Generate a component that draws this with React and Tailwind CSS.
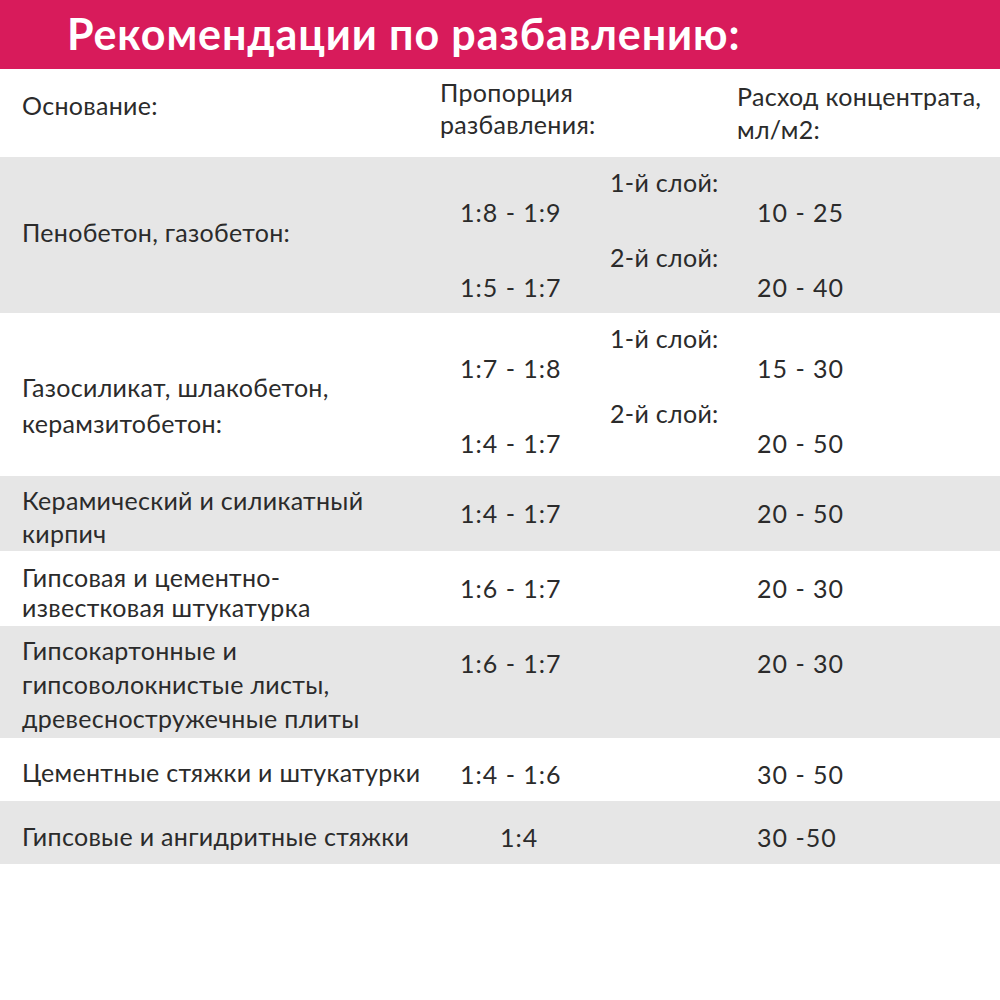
import React from "react";

const font = { fontFamily: "Lato, 'Open Sans', sans-serif" };

function Layered({ bg, h, labelPt, label, parts }) {
  return (
    <div className={`flex ${bg}`} style={{ height: h }}>
      <div className="w-[440px] pl-[22px] leading-[36px]" style={{ paddingTop: labelPt }}>
        {label.map((l) => (
          <div key={l}>{l}</div>
        ))}
      </div>
      <div className="flex flex-col pt-[10px] gap-[15px]">
        {parts.map(([layer, ratio, value]) => (
          <div key={layer + ratio} className="grid grid-cols-[150px_147px_1fr] leading-[30px]">
            <div />
            <div className="pl-[20px]">{layer}</div>
            <div />
            <div className="pl-[20px] tracking-[1px]">{ratio}</div>
            <div />
            <div className="pl-[20px] tracking-[1px]">{value}</div>
          </div>
        ))}
      </div>
    </div>
  );
}

function Simple({ bg, h, labelPt, lead, label, valuePt, ratio, ratioPl = 20, value }) {
  return (
    <div className={`flex ${bg}`} style={{ height: h }}>
      <div className="w-[440px] pl-[22px]" style={{ paddingTop: labelPt, lineHeight: lead + "px" }}>
        {label.map((l) => (
          <div key={l}>{l}</div>
        ))}
      </div>
      <div className="flex leading-[33px] tracking-[1px]" style={{ paddingTop: valuePt }}>
        <div className="w-[297px]" style={{ paddingLeft: ratioPl }}>
          {ratio}
        </div>
        <div className="pl-[20px]">{value}</div>
      </div>
    </div>
  );
}

export default function App() {
  return (
    <div className="w-[1000px] h-[1000px] bg-white text-[#2b2b2b] text-[25px] tracking-[0.3px]" style={font}>
      <div className="h-[69px] bg-[#d81b5b] pl-[67px] pt-[9px]">
        <h1 className="text-white font-bold text-[43px] leading-[50px] tracking-[0.9px]">
          Рекомендации по разбавлению:
        </h1>
      </div>

      <div className="flex h-[88px]">
        <div className="w-[440px] pl-[22px] pt-[19px] leading-[34px]">Основание:</div>
        <div className="w-[297px] pt-[7px] leading-[32px]">
          <div>Пропорция</div>
          <div>разбавления:</div>
        </div>
        <div className="pt-[11px] leading-[33px]">
          <div>Расход концентрата,</div>
          <div>мл/м2:</div>
        </div>
      </div>

      <Layered
        bg="bg-[#e6e6e6]"
        h={156}
        labelPt={57}
        label={["Пенобетон, газобетон:"]}
        parts={[
          ["1-й слой:", "1:8 - 1:9", "10 - 25"],
          ["2-й слой:", "1:5 - 1:7", "20 - 40"],
        ]}
      />
      <Layered
        bg="bg-white"
        h={163}
        labelPt={56}
        label={["Газосиликат, шлакобетон,", "керамзитобетон:"]}
        parts={[
          ["1-й слой:", "1:7 - 1:8", "15 - 30"],
          ["2-й слой:", "1:4 - 1:7", "20 - 50"],
        ]}
      />
      <Simple
        bg="bg-[#e6e6e6]"
        h={75}
        labelPt={8}
        lead={33}
        label={["Керамический и силикатный", "кирпич"]}
        valuePt={21}
        ratio="1:4 - 1:7"
        value="20 - 50"
      />
      <Simple
        bg="bg-white"
        h={75}
        labelPt={11}
        lead={30}
        label={["Гипсовая и цементно-", "известковая штукатурка"]}
        valuePt={21}
        ratio="1:6 - 1:7"
        value="20 - 30"
      />
      <Simple
        bg="bg-[#e6e6e6]"
        h={112}
        labelPt={7}
        lead={34}
        label={["Гипсокартонные и", "гипсоволокнистые листы,", "древесностружечные плиты"]}
        valuePt={21}
        ratio="1:6 - 1:7"
        value="20 - 30"
      />
      <Simple
        bg="bg-white"
        h={63}
        labelPt={18}
        lead={33}
        label={["Цементные стяжки и штукатурки"]}
        valuePt={20}
        ratio="1:4 - 1:6"
        value="30 - 50"
      />
      <Simple
        bg="bg-[#e6e6e6]"
        h={63}
        labelPt={19}
        lead={33}
        label={["Гипсовые и ангидритные стяжки"]}
        valuePt={20}
        ratio="1:4"
        ratioPl={60}
        value="30 -50"
      />
    </div>
  );
}
